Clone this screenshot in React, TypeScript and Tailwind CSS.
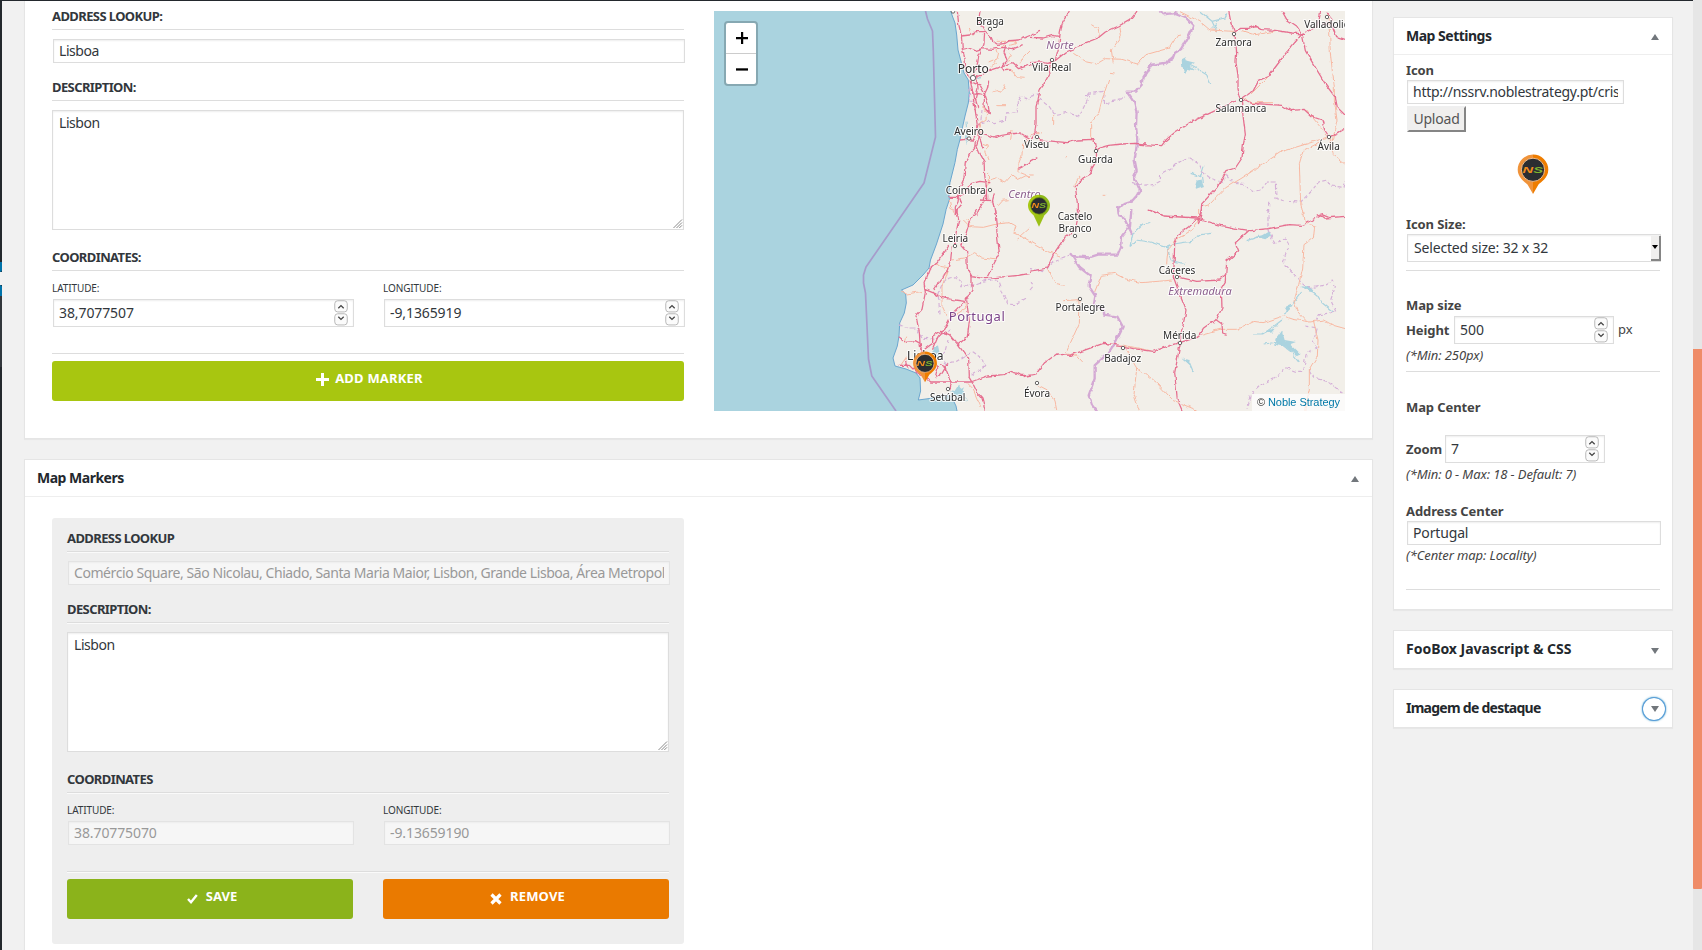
import type { ReactNode } from "react";

const sans = "font-['Noto_Sans','Open_Sans',sans-serif]";

function Heading({ children, etched = false }: { children: ReactNode; etched?: boolean }) {
  return (
    <h3
      className={`h-[25px] border-b border-[#dddddd] text-[13px] leading-[22px] font-bold tracking-[-0.6px] whitespace-nowrap text-[#32373c] ${
        etched ? "shadow-[0_1px_0_#fafafa]" : ""
      }`}
    >
      {children}
    </h3>
  );
}

function Spinner() {
  return (
    <svg width="14" height="26" viewBox="0 0 14 26" fill="none" className="shrink-0">
      <rect x="0.75" y="0.75" width="12.5" height="11.2" rx="3" fill="#fbfbfb" stroke="#b9b9b9" />
      <rect x="0.75" y="13.75" width="12.5" height="11.2" rx="3" fill="#fbfbfb" stroke="#b9b9b9" />
      <path d="M4.3 8.2 7 5.6l2.7 2.6" stroke="#444" strokeWidth="1.3" />
      <path d="M4.3 16.8 7 19.4l2.7-2.6" stroke="#444" strokeWidth="1.3" />
    </svg>
  );
}

function Field({
  children,
  className = "",
  disabled = false,
  spinner = false,
}: {
  children: ReactNode;
  className?: string;
  disabled?: boolean;
  spinner?: boolean;
}) {
  return (
    <div
      className={`flex items-center justify-between border px-[5px] text-[14px] whitespace-nowrap ${
        disabled
          ? "border-[#e3e3e3] bg-[#f6f6f6] text-[#999999] shadow-[inset_0_1px_2px_rgba(0,0,0,0.04)]"
          : "border-[#dddddd] bg-white text-[#32373c] shadow-[inset_0_1px_2px_rgba(0,0,0,0.07)]"
      } ${className}`}
    >
      <span className="min-w-0 flex-1 overflow-hidden leading-[20px]">{children}</span>
      {spinner && <Spinner />}
    </div>
  );
}

function TextArea({ children }: { children: ReactNode }) {
  return (
    <div className="mt-[9px] flex h-[120px] flex-col justify-between border border-[#dddddd] bg-white text-[14px] text-[#32373c] shadow-[inset_0_1px_2px_rgba(0,0,0,0.07)]">
      <span className="px-[6px] pt-[2px] leading-[20px] tracking-[-0.45px]">{children}</span>
      <svg width="10" height="10" viewBox="0 0 10 10" className="self-end" stroke="#8a8a8a" strokeWidth="1">
        <path d="M0.5 9 9 0.5M3.5 9 9 3.5M6.3 9 9 6.3" />
      </svg>
    </div>
  );
}

function Arrow({ up = false }: { up?: boolean }) {
  return (
    <svg width="8" height="6" viewBox="0 0 8 6" fill="#72777c">
      <path d={up ? "M4 0 8 6H0z" : "M0 0H8L4 6z"} />
    </svg>
  );
}

function Pin({
  tone,
  x,
  y,
  width,
  height,
}: {
  tone: "orange" | "green";
  x?: number;
  y?: number;
  width: number;
  height: number;
}) {
  const light = tone === "orange" ? "#f0933a" : "#a8c813";
  const dark = tone === "orange" ? "#ee7d00" : "#8fb91a";
  return (
    <svg x={x} y={y} width={width} height={height} viewBox="0 0 32 40" preserveAspectRatio="xMidYMin meet" overflow="visible">
      <path d="M16 .5A15.3 15.3 0 0 0 .7 15.8C.7 24 8.5 28.5 10.5 30.5L16 40z" fill={light} />
      <path d="M16 .5a15.3 15.3 0 0 1 15.3 15.3C31.3 24 23.5 28.5 21.5 30.5L16 40z" fill={dark} />
      {tone === "green" && <path d="M8.5 29L16 45l7.5-16z" fill="#9cc016" />}
      <circle cx="16" cy="15.8" r="11.6" fill="#2b2d31" stroke={tone === "orange" ? "#f7c79a" : "#6f9410"} strokeWidth="0.9" />
      <text
        x="5.5"
        y="19"
        textLength="20.5"
        lengthAdjust="spacingAndGlyphs"
        fontFamily="Liberation Sans"
        fontSize="9.5"
        fontWeight="bold"
        fontStyle="italic"
      >
        <tspan fill="#f08a1c">N</tspan>
        <tspan fill="#7db32e">S</tspan>
      </text>
    </svg>
  );
}

type Tile = { at: string; motorway: string; primary: string; water?: string; lakes?: string; region: string; border?: string };

// Road network split in four quadrants, each with its own origin at a third of a pixel per unit.
const tiles: Tile[] = [
  {
    at: "translate(710 0) scale(0.33333)",
    motorway:
      "M742 33l4 40 8 32 3 42 8 30 3 40 12 20 8 40 4 30 6 40 4 30 8 40 8 25M810 33l-4 30 18 30-2 40-16 35-6 40-10 20M754 108l25-3 20-10 25 0M824 93l18 15 6 15 14 10 24-3 12-8 30-2 28-12 34-14M756 148l20-4 20 8 20-6 30 2 32-6 30 4 30-12M886 138l-4 20 10 24-18 18 8 12 18-2M796 230l20-4 20-14 30-10 40-14 20 18 30-10 24 4M790 245l20 10 14 26-2 40 16 20-4-30-10-30 8-16 4-20M786 283l20-2 18 4M800 225l4 40-8 30 8 30M808 370l-4 15 6 15 20 4 26 8 20-6 22-4 30-3 16 10 14 8M810 400l-6 25-4 12 8 20 14 25 2 40 4 30 2 40 0 10M796 425l-2 20-14 16-14 25-4 50-12 25-6 45-8 15 0 24M750 420l18-2 20 2 8-15M838 548l-28-4-24 6-10 8-10 25-24 10M718 592h30l8 20-12 14-8 19M830 555l-4 30-4 18-14 22-8 20M808 600l40 2 8 43M848 600l5-20M925 505l35-18",
    primary:
      "M778 84l6 16 8 2M860 124l50 0 10 6-20 6M884 135l-24 12 4 10M892 158l12 8-8 16M930 190l10-20 20-20M866 158l-4 16-10 14M850 180l-14 6M860 190l-18 12M888 206l20 6 14 18 22 2M848 273l16-4 6 8 12-10 4-14M862 317l26 0M804 410l10-20-4-22 18-10 2-20-12-16M818 430l14 5-8 20 10 25M906 390l-4 30M960 415l-22 20-2 30-12 30 0 20 20 8 16 8M836 520l-2 35M834 540l26-6 24 12 20-22 20 15 24-12 12 6M718 600l4 20 14 25M865 617l14-16 14-2",
    water: "M768 365l3 40-4 30M800 240l14-8",
    region: "M816 330l-4 38 24-4 20 4 30-8 4-22 32 2 0-32 10-16 28 6M780 260l-2 40 16 2",
  },
  {
    at: "translate(1030 0) scale(0.33333)",
    motorway:
      "M118 33l-22 40-6 30-4 40-10 36M0 112l40 2 28-8 22 4M0 188l30-2 24 4 24-10 30-24 40-16 20-12 36-14 22-18 40-18 36-20 16-20 6-12M64 182l-8 20 4 20-16 28-14 20-6 30-6 20 0 50-4 32-10 16M18 410l14 10 40 4 40 4 30-8 50-2 8 40 6-14 30-8 40-4 40-2 32 2M325 433l70 4 12-16 28-24 50-32 60-28 70-34M200 455l-2 30-12 20-4 20-20 10-26 24 6 50 0 35M596 33l8 40 10 24 6 60-2 30 6 40 0 40 8 30M612 97l20-12 24 0 20-8 20 12 40 2 50 8 40 4M756 33l14 25 30 20 16 24M816 102l40-20 10-15 6-34M816 102l-50 60-50 66-30 14-16 30-36 25M816 102l10 50 30 50 30 50 30 40 6 30 26 26M636 300l30 10 90 6 26 16 40-4 24 22 30 10 8 30 12 18M900 410l25-12 20-12M634 304l12 100-6 30-4 40-20 30-25 8-30 50-46 50-2 30-8 30M358 630l40 15M0 485l22-12M860 645l16-4 20 8M900 60l20 50 25 8M890 35l20 25-30 15",
    primary:
      "M184 74l20 12 4 22M270 80l4 30-30 40 6 40M130 160l40 26 30 6 26-16 50 2 46 14 26-28 70-20 26-40 10-2M450 35l60 30 30 25 70 4M236 240l-20 60-10 40-24 30 0 40 14 20M240 220l14 2M68 345l0 30M0 410l16-14 20 6M636 292l30 16 60 0M636 92l36 12 30-4 34-8M660 285l60-60M893 40l6 60 2 60 12 100 0 40 8 60-20 88M896 410l-60 20-80 24-60 40-60 40-50 30-48 50-20 6M870 425l-50 26-12 40 4 120 8 34M900 415l10 50 36 28M830 330l40 50 18 26M150 530l-14 20 0 20M0 525l8 0M104 470l6 0M218 586l8 0",
    water: "M510 34l36 30 14 30M546 64l40-10 4-14M560 70l-12 16M468 190l32 16 30 18 12 28M522 500l-10 30-30-10M516 520l4 26",
    lakes: "M455 178l12-6 4 10 24 6-16 10 18 14-24-6-10 16-6-20zM500 542l14-4 8 20-24 8-2-10z",
    region:
      "M0 290l24-8 8 18 26 20 16 24 34-6 40 12 28-60-10-6 54-10 4 40 20-12 40-8M306 550l16 6 50-2 18-10 2-20 30-16 20-20 36-12 30 16 10 24 20 16 40 16 12-24 16 22 34 4 10 16 20 8 22-4 20-24h24l2 50 34 8 40 2 30-30 24-30 26-6 10 18 40 4 10-40M716 605l0 40",
    border:
      "M392 33l8 10 36-4 30 12 24 26-16 36-20 34-20 12-6 16-16 12-48 8-26 40-4 20-16 20-28 0 22 32 8 30-2 40 4 44-8 60 6 30-8 20 18 40-10 16-12 14-30 10-14 14 2 20 20 14 20 42",
  },
  {
    at: "translate(710 210) scale(0.33333)",
    motorway:
      "M740 0l6 30-8 40-2 35M800 0l-20 30-12 40-16 36M716 108l-34 50-24 20-16 40 4 30-10 50-18 20 10 50 2 30 8 42M726 110l-4 40-10 30-40 60M752 106l18 20 2 50 14 24 40 6 60-6 40-4 34-6M786 200l0 40-20 34-40 40-24 46-18 20-16 38M644 238l30 12 20 12 40 8 30 4M854 0l14 130-36 70M770 274l8 60-6 46-28 24 32 44 2 52M744 404l-26-30-26-10-24 14 0 22-24 18M566 466l32 0 20 20 34 20 10 10 60 0 60 0 50-18 50-4 20-10 20 6 10 6 30 0M566 380l20 14 30-2 14 8 4 30M586 450l8 26M664 450l20 20-8 30M690 464l14 4 20 50-4 20M776 500l12 20 14 28 14 16 10 38M714 460l-18 30-20 15",
    primary:
      "M670 155l20 14 24 4M760 30l20 20 40 2 40-10 40-4 18 10-6 20 22 10 30 18M786 50l-16-22M716 170l-20 60 0 60 14 30M724 150l40-6 30-16 24 16 40 6M640 244l-50 8-14-6M764 280l4 14-30 20M590 440l-18 26M770 520l20 20 22 50M590 380l-6 20M920 90l40-36",
    water: "M684 420l-2 14-14 8M760 550l-40-8M746 530l16 20 10 24",
    lakes: "M670 416l14-10 6 30-18 8zM738 536l8-12 6 14 10-6-6 14 14 6-14 4 4 14-12-8-8 8 0-12-14-2z",
    region:
      "M690 310l-6-60 14-30 20-16 20-4 20 20-6 10 30-2 40-16 40-2 14 40 20 32 20 2 36-22M566 344l20 10 30 0 20 30 40 4 20-16 30-14M714 390l-8 30-16 20 20 20 30-6 30-20 20-8 26 20 8 24-40 26",
  },
  {
    at: "translate(1030 210) scale(0.33333)",
    motorway:
      "M148 0l-12 60-30 20-34 50-20 44-52 10M356 0l46 18 100 6 60 20 60 12 40 6 54-6 60-12 40 2 30-16 26-16 12 10 62-5M516 0l-10 20-30 30-34 26-8 24-2 70-2 30 22 60 16 40-6 34-10 40 0 18-10 56-8 40 4 40 4 40 16 37M656 62l-40 36 10 24-36 32-4 60-12 20 2 60-16 34-40 30-14 22-60 20M440 200l60 14 70-4 16-16M556 328l20 14 2 30 12 4M440 400l-40 12-30 12-60-8-40-10-30-4-20-2-60 22-40 14-40-4-36 26-26 34-40 8",
    primary:
      "M0 96l34 20 36 14 20 8M54 176l22 44 28 6M100 272l50-3-2 70-40 90M110 432l30 4 18 20M214 196l40-6 30 16 50 12 50-4 44-4M214 196l-20 50M410 160l4-40 22-30 50-30 20-30 0-30M450 206l-36-30M520 372l50-14 50 0 50-24 30 4 60-20 30 10 50 8 40-6 30 16 36 10M820 0l6 40 28 8-4 36-28 20-4 70-12 50-14 50 10 30 26 28M850 330l14 60-2 50-24 40 0 60-14 62M288 414l20 40 12 20-8 80 16 48M320 474l30 20 30 24 50 54 70 28M272 404l30 6 60 12M22 524l30 16 22 30 6 30",
    water:
      "M300 110l20-20 40 6 50 16 22-10 50-8 30-20 34-4M300 110l8-40 30-28 20-4M410 112l16 40 22 6 16 2M650 92l30-10 34 0M812 230l30 10 20 16 14 22 34 28M760 312l14-10 14-20 30-40M668 372l30 0 30-20 28-22M704 402l40-6 40 30 24 30M462 446l18 16 10 24",
    lakes:
      "M676 80l20-4 20-12 4 14-14 10zM736 390l20-28 8 28 34 6-16 6 30 30-10 6-36-26-30-8zM700 366l30-10 14-12-20 24zM458 446l24 4-2 16zM812 224l30 8 12 16-20-4zM764 292l16-8 2 16-10 6z",
    region:
      "M124 134l-30 10-30 18-20 20-44-6M714 0l0 60 20 40 30-16 14 20-18 50 30 40 20 20 30 20 40-8 30-16 6 20-14 40 16 36-50 8-10 20M826 348l36 6-12 40 8 20-30 20-8 50-24 0-30-12-30 30-40 20-36 34-6 40M838 480l14 24 40 10 52 40M0 240l10-12-10-12",
    border:
      "M304 0l-4 50-24 30-2 30-10 24-60 0-26 8-54-4-2-6 26 40 34 26-6 30 20 30-4 24 30 16 0 16 40 6 16 30-24 50-20 30-40 36 0 40-18 50 10 30 18 22",
  },
];

type Label = { t: string; x: number; y: number; s?: number };
const cities: Label[] = [
  { t: "Braga", x: 990, y: 25 },
  { t: "Porto", x: 973.3, y: 72.5, s: 12 },
  { t: "Aveiro", x: 969, y: 135 },
  { t: "Coimbra", x: 965.7, y: 194.3 },
  { t: "Vila Real", x: 1051.7, y: 71 },
  { t: "Viseu", x: 1036.7, y: 147.7 },
  { t: "Guarda", x: 1095.5, y: 163 },
  { t: "Zamora", x: 1233.7, y: 45.7 },
  { t: "Salamanca", x: 1241, y: 111.7 },
  { t: "Valladolid", x: 1327, y: 28.3 },
  { t: "Ávila", x: 1328.7, y: 150 },
  { t: "Castelo", x: 1075, y: 220 },
  { t: "Branco", x: 1075, y: 232 },
  { t: "Leiria", x: 955.3, y: 242 },
  { t: "Lisboa", x: 925.3, y: 360, s: 12 },
  { t: "Setúbal", x: 947.7, y: 400.7 },
  { t: "Évora", x: 1037, y: 396.5 },
  { t: "Portalegre", x: 1080.3, y: 311 },
  { t: "Badajoz", x: 1122.7, y: 361.5 },
  { t: "Mérida", x: 1179.7, y: 339 },
  { t: "Cáceres", x: 1177, y: 274 },
];

const dots: [number, number, number?][] = [
  [990, 29],
  [973, 78, 2.6],
  [969, 138.5],
  [990, 190],
  [1052, 60],
  [1037, 137],
  [1096, 151],
  [1234, 34],
  [1241, 100],
  [1327, 17],
  [1329, 137],
  [1075, 236],
  [955, 246],
  [948, 389],
  [1037, 383],
  [1080, 299],
  [1123, 348],
  [1180, 343],
  [1177, 277],
  [953, 11.5],
];

const coast =
  "M950.7 11l2 6 2.3 6 1.7 12 1.3 15 2.7 10 3.3 13 4.3 7 1 13-1 10-3.3 13-3 13.5-2 10-2.7 10-2.3 13-5 20-1.3 10 .7 7-3.3 10L943 224l-6.5 20-6 16-1.5 8-6 7-10 10-11.5 5 4.2 4 .6 9-2 10-4.6 10-.7 13-1.7 10-4.3 12 2 8 11 3 10 4 4 5 .6 13-2.3 9 12-1.6 13-3.4 8 1.4 4.7 9.6 1 5";

function MapView() {
  return (
    <div className="relative h-[400px] w-[631px] overflow-hidden bg-[#aad3df]">
      <svg width="631" height="400" viewBox="714 11 631 400" fill="none" fontFamily="Noto Sans" strokeLinejoin="round">
        <defs>
          <filter id="rough" filterUnits="userSpaceOnUse" x="700" y="0" width="660" height="420">
            <feTurbulence type="fractalNoise" baseFrequency="0.16" numOctaves="2" seed="4" />
            <feDisplacementMap in="SourceGraphic" scale="4" xChannelSelector="R" yChannelSelector="G" />
          </filter>
        </defs>
        <path d={`${coast}H1345V11z`} fill="#f2efe9" />
        <path d={coast} stroke="#6ba6cf" strokeWidth="1" />
        <path
          d="M925.5 11l2 8 5 12 .8 20 2.2 86-11.5 46L904 212l-38 55-2.5 8v8l2 10 3 66 3.3 17L896 411"
          stroke="#a79ccb"
          strokeWidth="1.7"
        />
        <g filter="url(#rough)">
          {tiles.map((tile) => (
            <g key={tile.at} transform={tile.at}>
              <path d={tile.lakes} fill="#aad3df" />
              <path d={tile.water} stroke="#aad3df" strokeWidth="3.6" />
              <path d={tile.region} stroke="#d5b0d8" strokeWidth="3.5" strokeDasharray="12 7" />
              <path d={tile.border} stroke="#d4a9d4" strokeWidth="7" />
              <path d={tile.primary} stroke="#f8b8a2" strokeWidth="3" />
              <path d={tile.motorway} stroke="#e66e8f" strokeWidth="3.8" />
            </g>
          ))}
        </g>
        {dots.map(([cx, cy, r]) => (
          <circle key={`${cx}-${cy}`} cx={cx} cy={cy} r={r ?? 1.7} fill="#fff" stroke="#555" strokeWidth="0.9" />
        ))}
        <g textAnchor="middle" stroke="#ffffff" strokeOpacity="0.8" strokeWidth="2.2" paintOrder="stroke">
          {cities.map((c) => (
            <text key={c.t} x={c.x} y={c.y} fontSize={c.s ?? 10} fill="#2c2c2c">
              {c.t}
            </text>
          ))}
          <g fill="#8d618f" fontStyle="italic">
            <text x="1060" y="48.7" fontSize="11">Norte</text>
            <text x="1024.5" y="197.5" fontSize="11">Centro</text>
            <text x="1200" y="295" fontSize="11">Extremadura</text>
          </g>
          <text x="977" y="321" fontSize="13" letterSpacing="0.5" fill="#7c4489">Portugal</text>
        </g>
        <Pin tone="orange" x={912.5} y={351} width={25} height={31.25} />
        <Pin tone="green" x={1027.5} y={194.5} width={23} height={28.75} />
      </svg>
      <div className="absolute top-[10px] left-[10px] flex w-[34px] flex-col rounded-[4px] border-2 border-[#86a8b2] bg-white">
        <div className="flex h-[31px] items-center justify-center border-b border-[#cccccc] pl-px">
          <svg width="12" height="12" viewBox="0 0 12 12" fill="#000">
            <path d="M5 0h2.2v5H12v2.2H7.2V12H5V7.2H0V5h5z" />
          </svg>
        </div>
        <div className="flex h-[30px] items-center justify-center pl-px">
          <svg width="12" height="3" viewBox="0 0 12 3" fill="#000">
            <path d="M0 .3h12v2.3H0z" />
          </svg>
        </div>
      </div>
      <div className="absolute right-0 bottom-0 h-[17px] bg-white/70 px-[5px] font-['Liberation_Sans',sans-serif] text-[11px] leading-[16px] tracking-[-0.05px] text-[#333333]">
        © <span className="text-[#0078a8]">Noble Strategy</span>
      </div>
    </div>
  );
}

function Coordinates({ lat, lng, disabled = false, inset }: { lat: string; lng: string; disabled?: boolean; inset: string }) {
  const h = disabled ? "h-[24px]" : "h-[28px]";
  return (
    <div className="mt-[9px] flex gap-[30px] text-[10px] tracking-[-0.1px] text-[#32373c]">
      <div className={inset}>
        <div className="h-[16px] leading-[16px]">LATITUDE:</div>
        <Field disabled={disabled} spinner={!disabled} className={`mt-[3px] -mr-px ml-px ${h}`}>
          {lat}
        </Field>
      </div>
      <div className={inset}>
        <div className="h-[16px] leading-[16px]">LONGITUDE:</div>
        <Field disabled={disabled} spinner={!disabled} className={`mt-[3px] -mr-px ml-px ${h}`}>
          {lng}
        </Field>
      </div>
    </div>
  );
}

const button = "flex h-[40px] items-center justify-center rounded-[3px] pb-[5px] text-[13px] font-bold text-white";
const panel = "border border-[#e5e5e5] bg-white shadow-[0_1px_1px_rgba(0,0,0,0.04)]";
const sideLabel = "text-[13px] leading-[18px] font-bold tracking-[-0.1px] text-[#444444]";
const hint = "text-[13px] leading-[18px] tracking-[-0.1px] italic text-[#444444] whitespace-nowrap";

function SidePanelTitle({
  children,
  up = false,
  focused = false,
  tracking = "tracking-[-0.5px]",
  height = "h-[37px]",
}: {
  children: ReactNode;
  up?: boolean;
  focused?: boolean;
  tracking?: string;
  height?: string;
}) {
  return (
    <div className={`flex items-center justify-between pr-[7px] pl-[12px] ${height}`}>
      <h2 className={`pb-[2px] text-[14px] font-bold whitespace-nowrap text-[#23282d] ${tracking}`}>{children}</h2>
      <span
        className={`flex size-[22px] items-center justify-center rounded-full pt-px pl-[2px] ${
          focused ? "shadow-[0_0_0_1px_#5b9dd9,0_0_2px_1px_rgba(30,140,190,0.8)]" : "mt-[1px]"
        }`}
      >
        <Arrow up={up} />
      </span>
    </div>
  );
}

export default function App() {
  return (
    <div className={`flex h-[950px] w-[1702px] overflow-hidden bg-[#f1f1f1] ${sans}`}>
      <div className="flex w-[2px] flex-col bg-[#23282d]">
        <div className="mt-[262px] h-[10px] rounded-br-[2px] bg-[#0073aa]" />
        <div className="h-[13px] bg-[#f1f1f1]" />
        <div className="h-[11px] rounded-tr-[2px] bg-[#0073aa]" />
        <div className="h-[71px] bg-[#32373c]" />
      </div>

      <div className="flex w-[1691px] flex-col">
        <div className="h-px shrink-0 bg-[#23282d]" />
        <div className="flex pl-[22px]">
          <main className="flex w-[1349px] shrink-0 flex-col gap-[20px]">
            <section className={`flex h-[438px] gap-[30px] pl-[27px] ${panel} !border-t-0`}>
              <div className="w-[632px] pt-[4px]">
                <Heading>ADDRESS LOOKUP:</Heading>
                <Field className="mt-[9px] -mr-px ml-px h-[24px] tracking-[-0.45px]">Lisboa</Field>
                <div className="h-[13px]" />
                <Heading>DESCRIPTION:</Heading>
                <TextArea>Lisbon</TextArea>
                <div className="h-[16px]" />
                <Heading>COORDINATES:</Heading>
                <Coordinates lat="38,7077507" lng="-9,1365919" inset="w-[301px]" />
                <div className="mt-[26px] border-b border-[#dddddd]" />
                <div className={`mt-[7px] gap-[6px] bg-[#a8c610] pl-[3px] tracking-[0.2px] ${button}`}>
                  <svg width="13" height="13" viewBox="0 0 13 13" fill="#fff" className="relative top-[1px]">
                    <path d="M5 0h3v5h5v3H8v5H5V8H0V5h5z" />
                  </svg>
                  ADD MARKER
                </div>
              </div>
              <div className="pt-[10px]">
                <MapView />
              </div>
            </section>

            <section className={`h-[520px] ${panel}`}>
              <div className="flex h-[37px] items-center justify-between border-b border-[#eeeeee] pr-[13px] pl-[12px]">
                <h2 className="pb-[2px] text-[14px] font-bold tracking-[-0.5px] text-[#23282d]">Map Markers</h2>
                <span className="pt-[2px]">
                  <Arrow up />
                </span>
              </div>
              <div className="mt-[21px] ml-[27px] h-[426px] w-[632px] rounded-[3px] bg-[#eeeeee] px-[15px] pt-[9px]">
                <Heading etched>ADDRESS LOOKUP</Heading>
                <Field disabled className="mt-[9px] -mr-px ml-px h-[24px] tracking-[-0.43px]">
                  Comércio Square, São Nicolau, Chiado, Santa Maria Maior, Lisbon, Grande Lisboa, Área Metropol
                </Field>
                <div className="h-[13px]" />
                <Heading etched>DESCRIPTION:</Heading>
                <TextArea>Lisbon</TextArea>
                <div className="h-[16px]" />
                <Heading etched>COORDINATES</Heading>
                <Coordinates disabled lat="38.70775070" lng="-9.13659190" inset="w-[286px]" />
                <div className="mt-[26px] border-b border-[#dddddd] shadow-[0_1px_0_#fafafa]" />
                <div className="mt-[7px] flex gap-[30px]">
                  <div className={`w-[286px] gap-[8px] bg-[#8bb31b] pl-[4px] ${button}`}>
                    <svg width="11" height="10" viewBox="0 0 11 10" fill="none" className="relative top-[2px]">
                      <path d="M1 5l3 3.2L9.8 1" stroke="#fff" strokeWidth="2.4" />
                    </svg>
                    SAVE
                  </div>
                  <div className={`w-[286px] gap-[8px] bg-[#ea7a00] pl-[3px] tracking-[0.2px] ${button}`}>
                    <svg width="12" height="12" viewBox="0 0 12 12" fill="none" className="relative top-[2px]">
                      <path d="M1.5 1.5l9 9M10.5 1.5l-9 9" stroke="#fff" strokeWidth="3.2" />
                    </svg>
                    REMOVE
                  </div>
                </div>
              </div>
            </section>
          </main>

          <aside className="ml-[20px] flex w-[280px] shrink-0 flex-col gap-[20px] pt-[16px]">
            <section className={`h-[593px] ${panel}`}>
              <SidePanelTitle up height="h-[36px]">Map Settings</SidePanelTitle>
              <div className="flex flex-col border-t border-[#eeeeee] px-[12px] pt-[6px]">
                <div className={sideLabel}>Icon</div>
                <Field className="mt-px ml-px h-[24px] w-[217px] tracking-[-0.27px]">http://nssrv.noblestrategy.pt/cris</Field>
                <div className="mt-[2px] ml-px flex h-[26px] w-[59px] items-center justify-center border-2 border-[#efefef] border-r-[#858585] border-b-[#858585] bg-[#f0efee] pb-[2px] text-[14px] tracking-[-0.2px] text-[#555555]">
                  Upload
                </div>
                <div className="mt-[22px] flex h-[40px] justify-center">
                  <Pin tone="orange" width={32} height={40} />
                </div>
                <div className={`mt-[21px] ${sideLabel}`}>Icon Size:</div>
                <div className="mt-px -mr-px ml-px flex h-[28px] items-center justify-between border border-[#dddddd] bg-white pl-[6px] text-[14px] tracking-[-0.17px] text-[#32373c] shadow-[inset_0_1px_2px_rgba(0,0,0,0.07)]">
                  <span className="pb-px">Selected size: 32 x 32</span>
                  <span className="-mr-px flex h-[25px] w-[10px] items-center justify-center border-r-2 border-b-2 border-[#858585] bg-[#f0efee]">
                    <svg width="6" height="4" viewBox="0 0 6 4">
                      <path d="M0 0h6L3 4z" />
                    </svg>
                  </span>
                </div>
                <div className="mt-[8px] border-b border-[#dddddd]" />
                <div className={`mt-[25px] ${sideLabel}`}>Map size</div>
                <div className="mt-[2px] flex items-center">
                  <span className={`w-[48px] ${sideLabel}`}>Height</span>
                  <Field spinner className="h-[28px] w-[160px]">500</Field>
                  <span className="ml-[4px] text-[13px] text-[#444444]">px</span>
                </div>
                <div className={`mt-[2px] ${hint}`}>(*Min: 250px)</div>
                <div className="mt-[7px] border-b border-[#dddddd]" />
                <div className={`mt-[26px] ${sideLabel}`}>Map Center</div>
                <div className="mt-[19px] flex items-center">
                  <span className={`w-[39px] ${sideLabel}`}>Zoom</span>
                  <Field spinner className="h-[28px] w-[160px]">7</Field>
                </div>
                <div className={`mt-[2px] ${hint}`}>(*Min: 0 - Max: 18 - Default: 7)</div>
                <div className={`mt-[19px] ${sideLabel}`}>Address Center</div>
                <Field className="mt-[1px] -mr-px ml-px h-[24px] tracking-[-0.15px]">Portugal</Field>
                <div className={`mt-[1px] ${hint}`}>(*Center map: Locality)</div>
                <div className="mt-[25px] border-b border-[#dddddd]" />
              </div>
            </section>
            <section className={panel}>
              <SidePanelTitle tracking="tracking-[-0.02px]">FooBox Javascript &amp; CSS</SidePanelTitle>
            </section>
            <section className={panel}>
              <SidePanelTitle focused tracking="tracking-[-0.74px]">
                Imagem de destaque
              </SidePanelTitle>
            </section>
          </aside>
        </div>
      </div>

      <div className="w-[9px] bg-[#e6e6e6] pt-[349px]">
        <div className="h-[540px] rounded-b-[1px] bg-[#ef8c68]" />
      </div>
    </div>
  );
}
